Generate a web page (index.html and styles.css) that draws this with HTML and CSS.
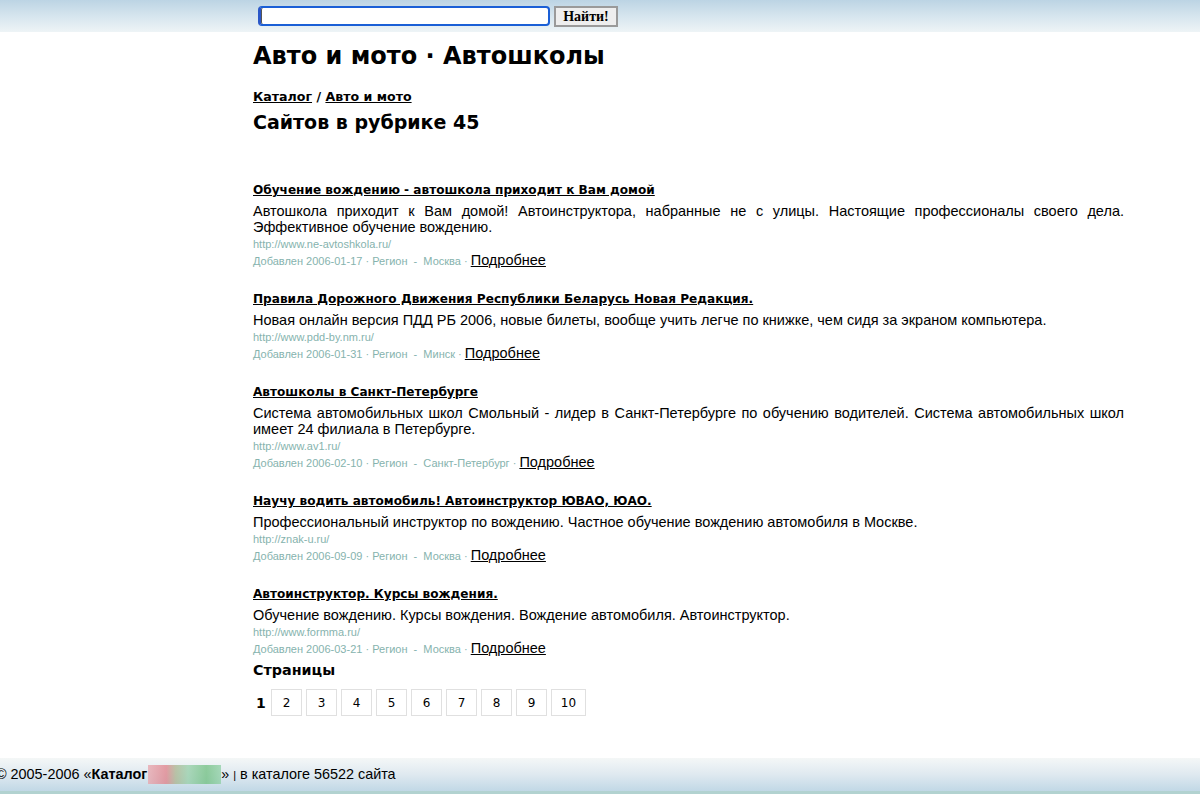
FILE: index.html
```html
<!DOCTYPE html>
<html lang="ru">
<head>
<meta charset="utf-8">
<title>Авто и мото · Автошколы</title>
<link rel="stylesheet" href="styles.css">
</head>
<body>
<div class="topbar">
  <form class="search">
    <input class="search-input" type="text">
    <button class="search-btn" type="button">Найти!</button>
  </form>
</div>
<div class="content">
  <h1 class="title">Авто и мото · Автошколы</h1>
  <div class="crumbs"><a href="#">Каталог</a> / <a href="#">Авто и мото</a></div>
  <h2 class="count">Сайтов в рубрике 45</h2>

  <div class="list">
    <div class="item">
      <a class="item-title" href="#">Обучение вождению - автошкола приходит к Вам домой</a>
      <p class="item-desc">Автошкола приходит к Вам домой! Автоинструктора, набранные не с улицы. Настоящие профессионалы своего дела. Эффективное обучение вождению.</p>
      <div class="item-url">http://www.ne-avtoshkola.ru/</div>
      <div class="item-meta">Добавлен 2006-01-17 · Регион &nbsp;-&nbsp; Москва · <a class="more" href="#">Подробнее</a></div>
    </div>
    <div class="item">
      <a class="item-title" href="#">Правила Дорожного Движения Республики Беларусь Новая Редакция.</a>
      <p class="item-desc">Новая онлайн версия ПДД РБ 2006, новые билеты, вообще учить легче по книжке, чем сидя за экраном компьютера.</p>
      <div class="item-url">http://www.pdd-by.nm.ru/</div>
      <div class="item-meta">Добавлен 2006-01-31 · Регион &nbsp;-&nbsp; Минск · <a class="more" href="#">Подробнее</a></div>
    </div>
    <div class="item">
      <a class="item-title" href="#">Автошколы в Санкт-Петербурге</a>
      <p class="item-desc">Система автомобильных школ Смольный - лидер в Санкт-Петербурге по обучению водителей. Система автомобильных школ имеет 24 филиала в Петербурге.</p>
      <div class="item-url">http://www.av1.ru/</div>
      <div class="item-meta">Добавлен 2006-02-10 · Регион &nbsp;-&nbsp; Санкт-Петербург · <a class="more" href="#">Подробнее</a></div>
    </div>
    <div class="item">
      <a class="item-title" href="#">Научу водить автомобиль! Автоинструктор ЮВАО, ЮАО.</a>
      <p class="item-desc">Профессиональный инструктор по вождению. Частное обучение вождению автомобиля в Москве.</p>
      <div class="item-url">http://znak-u.ru/</div>
      <div class="item-meta">Добавлен 2006-09-09 · Регион &nbsp;-&nbsp; Москва · <a class="more" href="#">Подробнее</a></div>
    </div>
    <div class="item">
      <a class="item-title" href="#">Автоинструктор. Курсы вождения.</a>
      <p class="item-desc">Обучение вождению. Курсы вождения. Вождение автомобиля. Автоинструктор.</p>
      <div class="item-url">http://www.formma.ru/</div>
      <div class="item-meta">Добавлен 2006-03-21 · Регион &nbsp;-&nbsp; Москва · <a class="more" href="#">Подробнее</a></div>
    </div>
  </div>

  <h3 class="pages-title">Страницы</h3>
  <div class="pager">
    <span class="current">1</span>
    <a class="page" href="#">2</a>
    <a class="page" href="#">3</a>
    <a class="page" href="#">4</a>
    <a class="page" href="#">5</a>
    <a class="page" href="#">6</a>
    <a class="page" href="#">7</a>
    <a class="page" href="#">8</a>
    <a class="page" href="#">9</a>
    <a class="page wide" href="#">10</a>
  </div>
</div>
<div class="footer">
  <div class="footer-text">© 2005-2006 «<b>Каталог</b> <span class="blur"></span>» <span class="sep">|</span> в каталоге 56522 сайта</div>
</div>
</body>
</html>
```

FILE: styles.css
```css
html, body {
  margin: 0;
  padding: 0;
  background: #fff;
}
body {
  font-family: "Liberation Sans", Arial, sans-serif;
  color: #000;
}
.topbar {
  height: 32px;
  background: linear-gradient(to bottom, #bcd4e4 0%, #d6e5ee 50%, #eef4f6 100%);
  display: flex;
  align-items: flex-start;
}
.search {
  margin: 6px 0 0 258px;
  display: flex;
  gap: 4px;
  align-items: flex-start;
}
.search-input {
  width: 292px;
  height: 20px;
  box-sizing: border-box;
  border: 2px solid #1a5fd6;
  border-left: 3px solid #2a57c8;
  border-radius: 4px;
  background: #fff;
  padding: 0;
  margin: 0;
  box-shadow: inset 1px 0 0 #555;
}
.search-btn {
  height: 21px;
  width: 64px;
  box-sizing: border-box;
  padding: 0;
  margin: 0;
  border: 2px solid #9a9a9a;
  border-radius: 0;
  background: #eeeeee;
  font-family: "Liberation Serif", "Times New Roman", serif;
  font-weight: bold;
  font-size: 14px;
  color: #000;
  line-height: 15px;
}
.content {
  margin-left: 253px;
  width: 871px;
  padding-bottom: 42px;
}
.title {
  font-family: "DejaVu Sans", Verdana, sans-serif;
  font-size: 24px;
  font-weight: bold;
  margin: 10px 0 0 0;
  line-height: 28px;
}
.crumbs {
  font-family: "DejaVu Sans", Verdana, sans-serif;
  font-weight: bold;
  font-size: 12.6px;
  margin-top: 19px;
  line-height: 16px;
}
.crumbs a {
  color: #000;
}
.count {
  font-family: "DejaVu Sans", Verdana, sans-serif;
  font-size: 19px;
  font-weight: bold;
  margin: 6px 0 0 0;
  line-height: 22px;
}
.list {
  margin-top: 47px;
  display: flex;
  flex-direction: column;
  gap: 21px;
}
.item-title {
  font-family: "DejaVu Sans", Verdana, sans-serif;
  font-weight: bold;
  font-size: 12.1px;
  color: #000;
  line-height: 16px;
  display: inline-block;
}
.item-desc {
  margin: 5px 0 0 0;
  font-size: 14.5px;
  line-height: 16px;
  text-align: justify;
}
.item-url {
  margin-top: 1px;
  font-size: 11px;
  color: #86b3ae;
  line-height: 16px;
}
.item-meta {
  font-size: 11px;
  color: #86b3ae;
  line-height: 16px;
  height: 16px;
}
.more {
  font-size: 14.5px;
  line-height: 16px;
  color: #000;
}
.pages-title {
  font-family: "DejaVu Sans", Verdana, sans-serif;
  font-size: 14.3px;
  font-weight: bold;
  margin: 4px 0 0 0;
  line-height: 20px;
}
.pager {
  display: flex;
  align-items: center;
  margin-top: 9px;
  margin-left: 3px;
  gap: 4px;
  font-family: "DejaVu Sans", Verdana, sans-serif;
  font-size: 12px;
}
.current {
  font-weight: bold;
  font-size: 14px;
  width: 11px;
}
.page {
  width: 31px;
  height: 27px;
  box-sizing: border-box;
  border: 1px solid #e0e0e0;
  display: flex;
  align-items: center;
  justify-content: center;
  color: #000;
  text-decoration: none;
}
.page.wide {
  width: 35px;
}
.footer {
  height: 33px;
  background: linear-gradient(to bottom, #f4f7f7 0%, #dfe9f0 50%, #c1d8e6 100%);
  border-bottom: 3px solid #b2d2d0;
  display: flex;
  align-items: center;
}
.footer-text {
  font-size: 14.4px;
  margin-left: -4px;
  white-space: nowrap;
}
.blur {
  display: inline-block;
  width: 73px;
  height: 19px;
  vertical-align: -5px;
  margin-left: -3px;
  background:
    linear-gradient(to right, #e8a6ad 0, #e07f88 25%, #aab48e 38%, #96cfa8 55%, #6fbf7f 80%, #8fd0a5 100%);
  opacity: 0.75;
}
.sep {
  font-size: 11px;
}
```
